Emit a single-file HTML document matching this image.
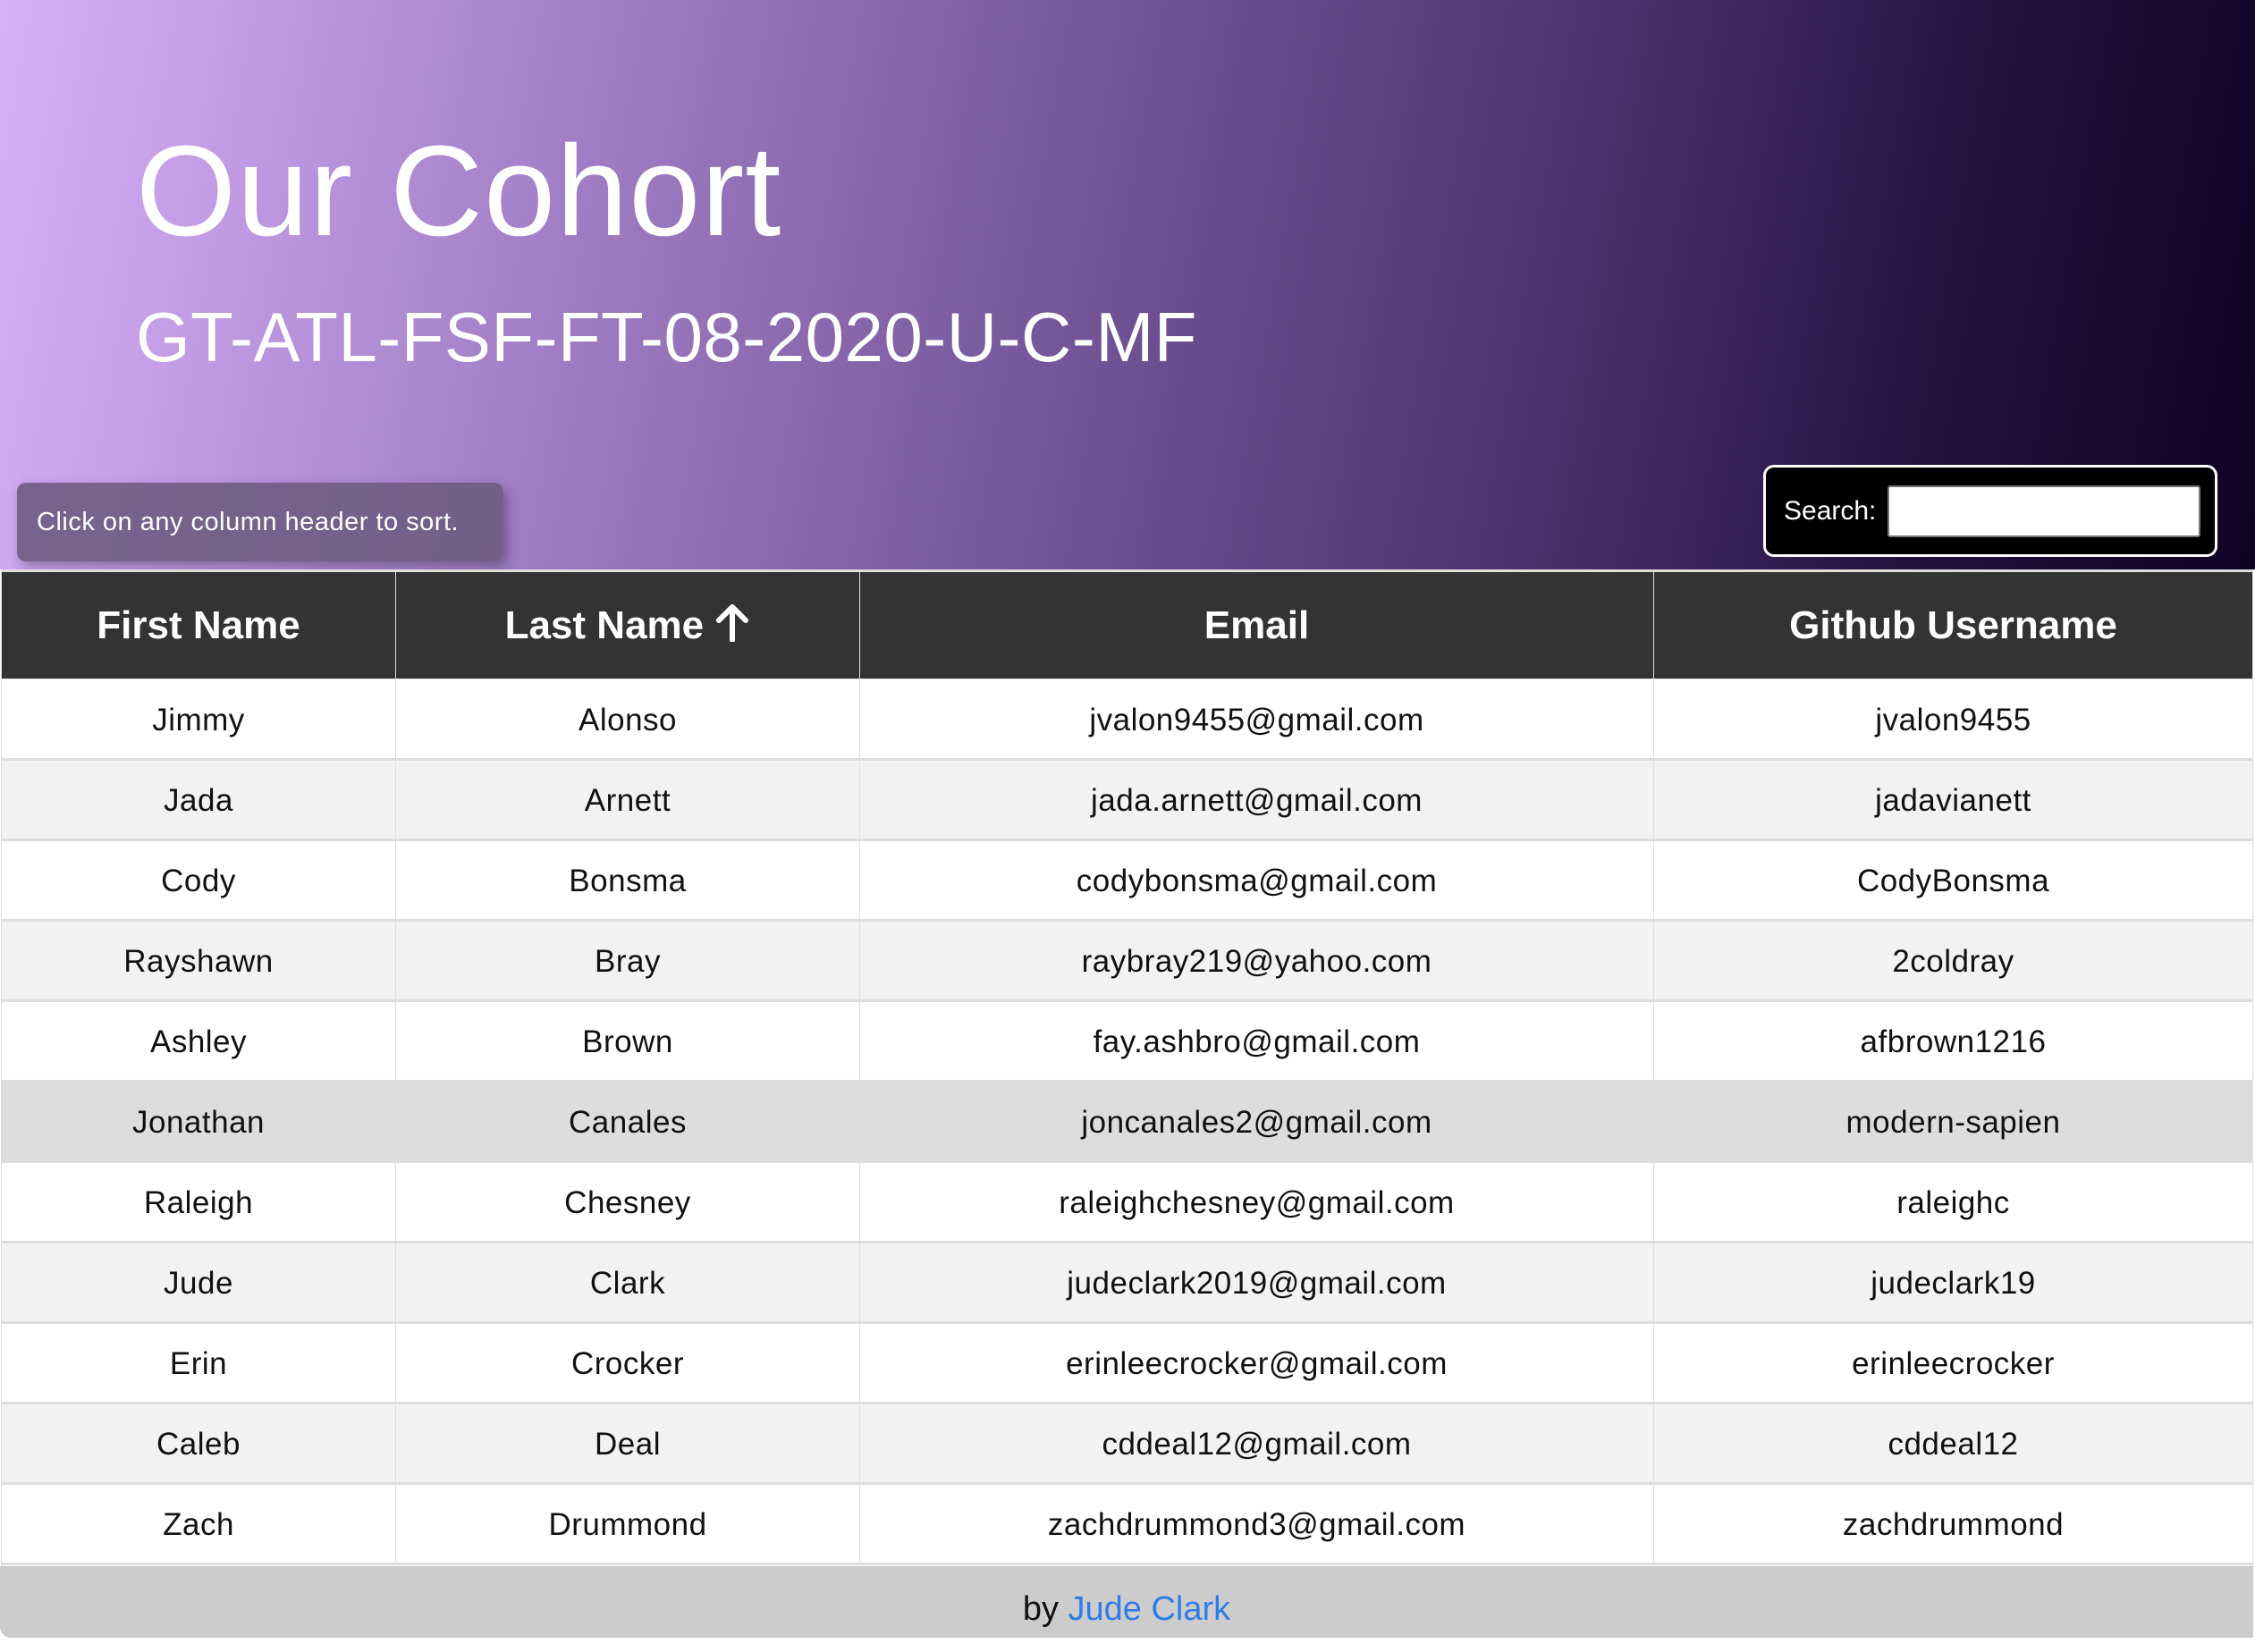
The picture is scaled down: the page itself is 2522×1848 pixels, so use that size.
<!DOCTYPE html>
<html><head><meta charset="utf-8"><style>
*{margin:0;padding:0;box-sizing:border-box}
html,body{width:2522px;height:1832px;overflow:hidden;background:#fff;font-family:"Liberation Sans",sans-serif}
.hero{position:absolute;left:0;top:0;width:2522px;height:637px;background:linear-gradient(100deg,#d8b0fa 0%,#a27fc6 25%,#7a5a9e 45%,#4d3370 68%,#24123f 85%,#0e0224 100%)}
h1{position:absolute;left:152px;top:142px;font-size:144px;font-weight:normal;color:#fff;line-height:1;letter-spacing:1px}
h2{position:absolute;left:152px;top:338px;font-size:78px;font-weight:normal;color:#fff;line-height:1;letter-spacing:.5px}
.tip{position:absolute;left:19px;top:540px;width:544px;height:88px;background:rgba(110,92,130,.9);border-radius:10px;box-shadow:4px 6px 14px rgba(0,0,0,.3);color:#fff;font-size:29px;line-height:88px;padding-left:22px;letter-spacing:.5px}
.search{position:absolute;left:1972px;top:520px;width:508px;height:103px;background:#000;border:3px solid #fff;border-radius:12px;color:#fff;font-size:30px}
.search span{position:absolute;left:20px;top:32px}
.search i{position:absolute;left:136px;top:20px;width:350px;height:58px;background:#fff;border:2px solid #777;border-radius:3px}
table{position:absolute;left:1px;top:637px;width:2518px;border-collapse:collapse;table-layout:fixed}
th{background:#333;color:#fff;font-size:44px;font-weight:bold;height:121px;border:1px solid #ddd;border-top:3px solid #ddd}
td{height:90px;text-align:center;font-size:35px;color:#111;border:1px solid #ddd;border-bottom:3px solid #ddd;letter-spacing:.5px;padding-top:3px}
tr:nth-child(even) td{background:#f2f2f2}
tr.h td{background:#ddd}
.foot{position:absolute;left:0;top:1752px;width:2520px;height:80px;background:#ccc;text-align:center;font-size:38px;line-height:96px;color:#111;border-bottom-left-radius:12px}
.foot a{color:#2f7de8;text-decoration:none}
</style></head><body>
<div class="hero">
<h1>Our Cohort</h1>
<h2>GT-ATL-FSF-FT-08-2020-U-C-MF</h2>
<div class="tip">Click on any column header to sort.</div>
<div class="search"><span>Search:</span><i></i></div>
</div>
<table>
<colgroup><col style="width:441px"><col style="width:519px"><col style="width:888px"><col style="width:670px"></colgroup>
<thead><tr><th>First Name</th><th>Last Name <svg width="40" height="44" viewBox="0 0 40 44" style="vertical-align:-4px"><path d="M20 42V6M5 20L20 5L35 20" stroke="#fff" stroke-width="6" fill="none" stroke-linecap="round" stroke-linejoin="round"/></svg></th><th>Email</th><th>Github Username</th></tr></thead>
<tbody>
<tr><td>Jimmy</td><td>Alonso</td><td>jvalon9455@gmail.com</td><td>jvalon9455</td></tr>
<tr><td>Jada</td><td>Arnett</td><td>jada.arnett@gmail.com</td><td>jadavianett</td></tr>
<tr><td>Cody</td><td>Bonsma</td><td>codybonsma@gmail.com</td><td>CodyBonsma</td></tr>
<tr><td>Rayshawn</td><td>Bray</td><td>raybray219@yahoo.com</td><td>2coldray</td></tr>
<tr><td>Ashley</td><td>Brown</td><td>fay.ashbro@gmail.com</td><td>afbrown1216</td></tr>
<tr class="h"><td>Jonathan</td><td>Canales</td><td>joncanales2@gmail.com</td><td>modern-sapien</td></tr>
<tr><td>Raleigh</td><td>Chesney</td><td>raleighchesney@gmail.com</td><td>raleighc</td></tr>
<tr><td>Jude</td><td>Clark</td><td>judeclark2019@gmail.com</td><td>judeclark19</td></tr>
<tr><td>Erin</td><td>Crocker</td><td>erinleecrocker@gmail.com</td><td>erinleecrocker</td></tr>
<tr><td>Caleb</td><td>Deal</td><td>cddeal12@gmail.com</td><td>cddeal12</td></tr>
<tr><td>Zach</td><td>Drummond</td><td>zachdrummond3@gmail.com</td><td>zachdrummond</td></tr>
</tbody></table>
<div class="foot">by <a>Jude Clark</a></div>
</body></html>
